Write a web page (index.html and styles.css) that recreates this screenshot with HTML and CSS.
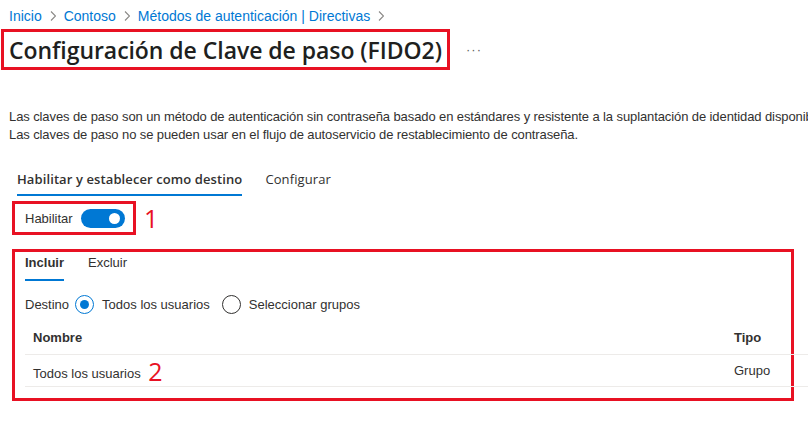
FILE: index.html
```html
<!DOCTYPE html>
<html lang="es">
<head>
<meta charset="utf-8">
<title>Configuración de Clave de paso (FIDO2)</title>
<link rel="stylesheet" href="styles.css">
</head>
<body>
<div class="page">
  <nav class="breadcrumb">
    <a class="crumb">Inicio</a>
    <svg class="chev" viewBox="0 0 6 12" width="6" height="12"><path d="M1 1.5 L5.5 6 L1 10.5" fill="none" stroke="#8a8886" stroke-width="1.1"/></svg>
    <a class="crumb">Contoso</a>
    <svg class="chev" viewBox="0 0 6 12" width="6" height="12"><path d="M1 1.5 L5.5 6 L1 10.5" fill="none" stroke="#8a8886" stroke-width="1.1"/></svg>
    <a class="crumb">Métodos de autenticación | Directivas</a>
    <svg class="chev" viewBox="0 0 6 12" width="6" height="12"><path d="M1 1.5 L5.5 6 L1 10.5" fill="none" stroke="#8a8886" stroke-width="1.1"/></svg>
  </nav>

  <div class="title-row">
    <div class="title-box"><h1 class="title">Configuración de Clave de paso (FIDO2)</h1></div>
    <span class="more">···</span>
  </div>

  <div class="desc">
    <p class="desc-line">Las claves de paso son un método de autenticación sin contraseña basado en estándares y resistente a la suplantación de identidad disponible</p>
    <p class="desc-line">Las claves de paso no se pueden usar en el flujo de autoservicio de restablecimiento de contraseña.</p>
  </div>

  <div class="tabs">
    <span class="tab active">Habilitar y establecer como destino</span>
    <span class="tab">Configurar</span>
  </div>

  <div class="enable-row">
    <div class="enable-box">
      <span class="label">Habilitar</span>
      <span class="toggle"><span class="knob"></span></span>
    </div>
    <span class="marker">1</span>
  </div>

  <div class="scope">
    <div class="subtabs">
      <span class="subtab active">Incluir</span>
      <span class="subtab">Excluir</span>
    </div>
    <div class="target-row">
      <span class="label">Destino</span>
      <span class="radio checked"><span class="dot"></span></span>
      <span class="opt">Todos los usuarios</span>
      <span class="radio"></span>
      <span class="opt">Seleccionar grupos</span>
    </div>
    <div class="table">
      <div class="row head">
        <span class="cell">Nombre</span>
        <span class="cell">Tipo</span>
      </div>
      <div class="row">
        <span class="cell">Todos los usuarios <span class="marker inline">2</span></span>
        <span class="cell">Grupo</span>
      </div>
    </div>
  </div>
</div>
</body>
</html>
```

FILE: styles.css
```css
* { box-sizing: border-box; }
html, body { margin: 0; padding: 0; background: #fff; }
body {
  width: 808px;
  height: 427px;
  overflow: hidden;
  font-family: "Liberation Sans", Arial, sans-serif;
  color: #323130;
  font-size: 13px;
}
.page { width: 808px; }

.breadcrumb {
  display: flex;
  align-items: center;
  gap: 8px;
  height: 20px;
  margin-top: 6px;
  padding-left: 9px;
  font-size: 14px;
  color: #0078d4;
}
.crumb { color: #0078d4; text-decoration: none; }

.title-row {
  display: flex;
  align-items: center;
  margin-top: 3px;
}
.title-box {
  margin-left: 1px;
  width: 449px;
  height: 41px;
  border: 3px solid #e81123;
  padding-left: 5px;
  display: flex;
  align-items: center;
}
.title {
  margin: 0;
  font-size: 23px;
  font-weight: 600;
  font-family: "Open Sans", "Liberation Sans", sans-serif;
  color: #201f1e;
  letter-spacing: -0.05px;
  white-space: nowrap;
}
.more {
  margin-left: 16px;
  color: #605e5c;
  font-size: 13px;
  letter-spacing: 1px;
}

.desc {
  margin-top: 38px;
  padding-left: 9px;
}
.desc-line {
  margin: 0;
  line-height: 18px;
  white-space: nowrap;
  font-size: 13px;
  letter-spacing: -0.1px;
}

.tabs {
  display: flex;
  gap: 23px;
  margin-top: 26px;
  padding-left: 17px;
}
.tab {
  font-family: "Open Sans", "Liberation Sans", sans-serif;
  font-size: 13px;
  line-height: 18px;
  letter-spacing: 0.1px;
  padding-bottom: 6px;
  border-bottom: 2px solid transparent;
}
.tab.active {
  font-weight: 600;
  border-bottom-color: #0078d4;
  color: #323130;
}

.enable-row {
  display: flex;
  align-items: center;
  margin-top: 5px;
  margin-left: 12px;
}
.enable-box {
  width: 124px;
  height: 34px;
  border: 3px solid #e81123;
  display: flex;
  align-items: center;
  padding-left: 10px;
  gap: 8px;
}
.label { font-size: 13px; }
.toggle {
  width: 44px;
  height: 19px;
  border-radius: 10px;
  background: #0078d4;
  display: flex;
  align-items: center;
  justify-content: flex-end;
  padding-right: 5px;
}
.knob {
  width: 11px;
  height: 11px;
  border-radius: 50%;
  background: #fff;
}
.marker {
  color: #e81123;
  font-size: 25px;
  line-height: 24px;
  margin-left: 8px;
  font-family: "Open Sans", "Liberation Sans", sans-serif;
}
.marker.inline { margin-left: 4px; vertical-align: -3px; }

.scope {
  margin-top: 14px;
  margin-left: 12px;
  width: 782px;
  height: 152px;
  border: 3px solid #e81123;
  padding-left: 10px;
}
.subtabs {
  display: flex;
  gap: 24px;
  padding-top: 2px;
}
.subtab {
  line-height: 18px;
  padding-bottom: 7px;
  border-bottom: 2px solid transparent;
}
.subtab.active {
  font-weight: 600;
  border-bottom-color: #0078d4;
}

.target-row {
  display: flex;
  align-items: center;
  margin-top: 13px;
  height: 20px;
}
.target-row .label { margin-right: 6px; }
.radio {
  width: 19px;
  height: 19px;
  border-radius: 50%;
  border: 1px solid #323130;
  display: flex;
  align-items: center;
  justify-content: center;
  margin-right: 8px;
}
.radio.checked { border-color: #0078d4; }
.dot { width: 9px; height: 9px; border-radius: 50%; background: #0078d4; }
.opt { margin-right: 12px; }

.table {
  margin-top: 7px;
  margin-right: -17px;
}
.row {
  display: grid;
  grid-template-columns: 701px 1fr;
  height: 32px;
  align-items: center;
  border-bottom: 1px solid #edebe9;
}
.row.head { font-weight: 600; height: 34px; }
.row:not(.head) .cell { padding-top: 0; }
.cell { padding-left: 8px; white-space: nowrap; }
```
